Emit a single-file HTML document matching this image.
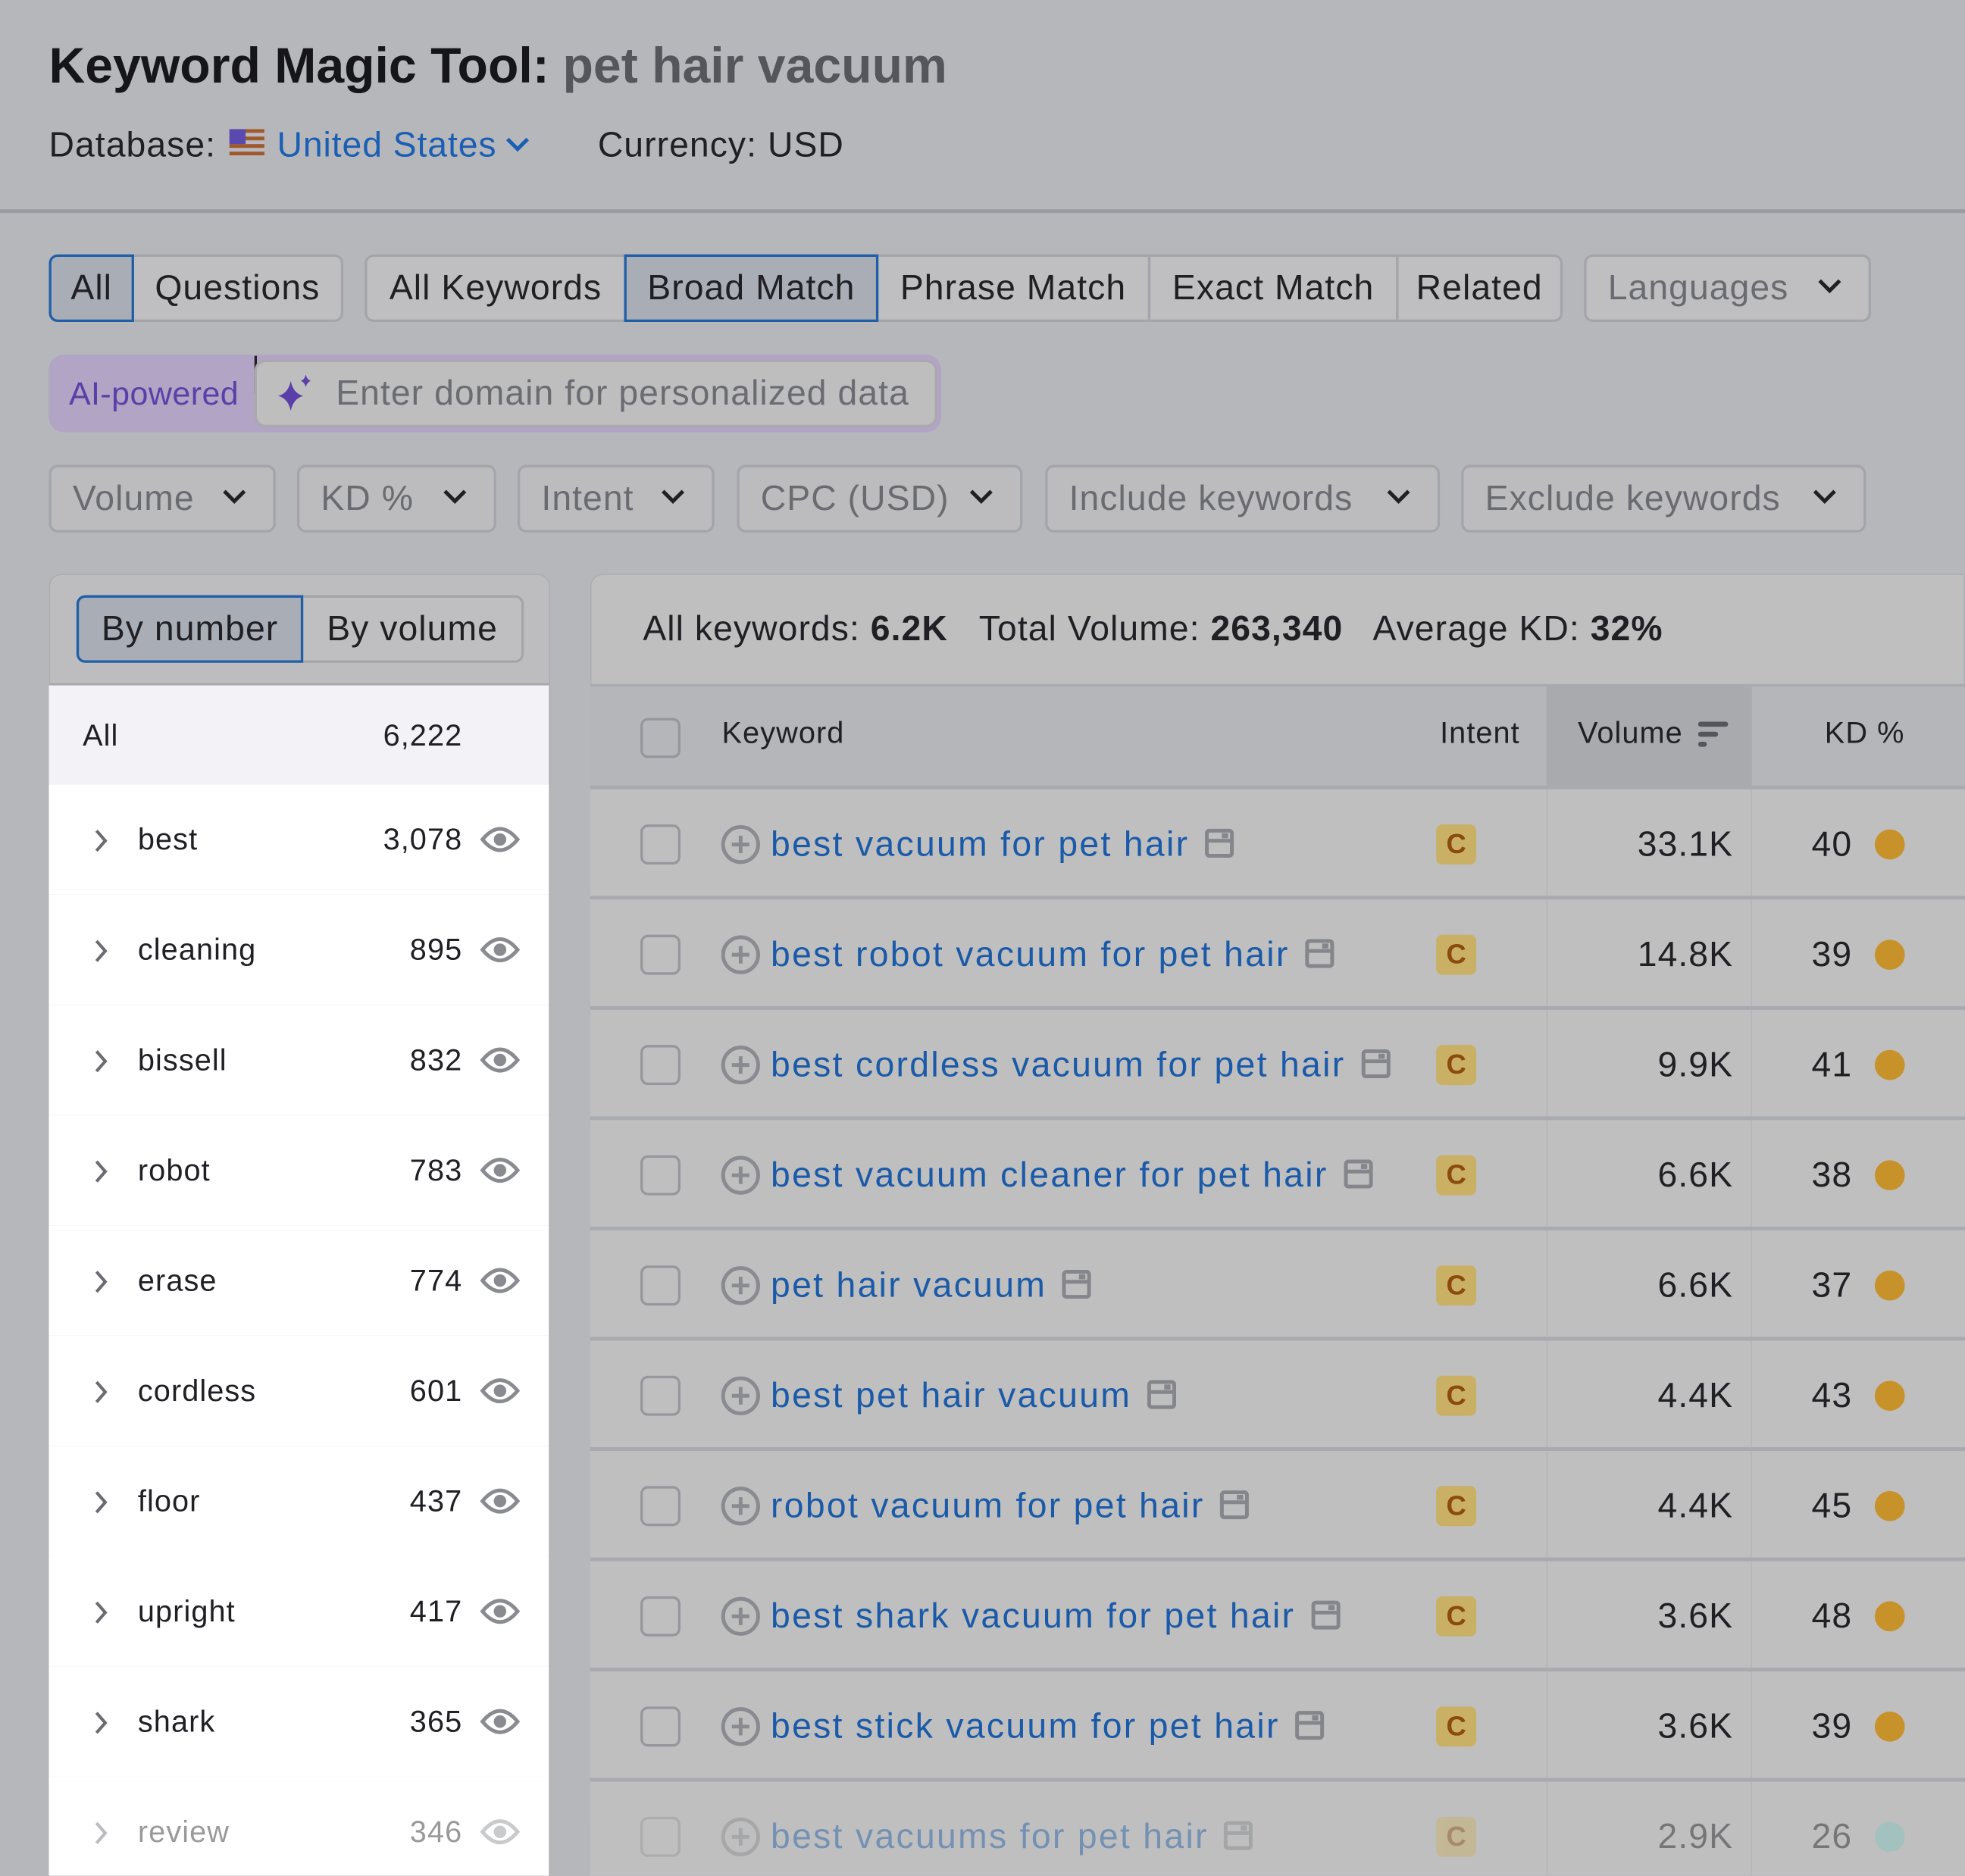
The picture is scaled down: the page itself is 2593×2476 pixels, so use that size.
<!DOCTYPE html>
<html><head><meta charset="utf-8"><style>
*{box-sizing:border-box;margin:0;padding:0}
html,body{width:2593px;height:2475px;overflow:hidden;background:#b6b7bb}
#s{position:absolute;left:0;top:0;width:1568px;height:1497px;overflow:hidden;transform:scale(1.6537);transform-origin:0 0;font-family:"Liberation Sans",sans-serif;color:#1f1f24;letter-spacing:0.04em}
.a{position:absolute;white-space:nowrap}
.btn{position:absolute;height:54px;border:2px solid #a4a5aa;background:#bfbfc1;font-size:28px;line-height:50px;text-align:center;color:#1f1f24}
.sel{background:#a9adb5;border-color:#1f5fa8;z-index:2}
.flt{position:absolute;top:371px;height:54px;border:2px solid #a4a5aa;border-radius:7px;background:#bcbcbe;font-size:28px;line-height:50px;color:#6a6b71;padding-left:17px}
.chev{position:absolute;right:20px;top:16px;width:22px;height:14px}
.lrow{position:absolute;left:39px;width:399px;height:88px;background:#fff;font-size:24px}
.lrow .n{position:absolute;left:71px;top:31px}
.lrow .c{position:absolute;right:69px;top:31px}
.trow{position:absolute;left:471px;width:1097px;height:88px;background:#bfbfbf;border-bottom:3px solid #a9aaae;font-size:28px}
</style></head><body><div id="s">
<div class="a" style="left:39px;top:31px;font-size:40px;font-weight:bold;color:#16161a;letter-spacing:0">Keyword Magic Tool:</div>
<div class="a" style="left:449px;top:31px;font-size:40px;font-weight:bold;color:#55565c;letter-spacing:0">pet hair vacuum</div>
<div class="a" style="left:39px;top:100px;font-size:28px">Database:</div>
<svg class="a" style="left:183px;top:103px" width="28" height="22"><rect width="28" height="22" fill="#b9b9c4"/><g fill="#a05a2a"><rect y="0" width="28" height="3"/><rect y="6" width="28" height="3"/><rect y="12" width="28" height="3"/><rect y="18" width="28" height="3"/></g><rect width="13" height="12" fill="#5a4ab0"/></svg>
<div class="a" style="left:221px;top:100px;font-size:28px;color:#1a5fb4;letter-spacing:0.02em">United States</div>
<svg class="a" style="left:403px;top:108px" width="20" height="14"><path d="M2 3l8 8 8-8" fill="none" stroke="#1a5fb4" stroke-width="3"/></svg>
<div class="a" style="left:477px;top:100px;font-size:28px">Currency: USD</div>
<div class="a" style="left:0;top:167px;width:1568px;height:3px;background:#9b9ca1"></div>

<div class="btn sel" style="left:39px;top:203px;width:68px;border-radius:7px 0 0 7px">All</div>
<div class="btn" style="left:105px;top:203px;width:169px;border-radius:0 7px 7px 0">Questions</div>
<div class="btn" style="left:291px;top:203px;width:209px;border-radius:7px 0 0 7px">All Keywords</div>
<div class="btn sel" style="left:498px;top:203px;width:203px">Broad Match</div>
<div class="btn" style="left:699px;top:203px;width:219px">Phrase Match</div>
<div class="btn" style="left:916px;top:203px;width:200px">Exact Match</div>
<div class="btn" style="left:1114px;top:203px;width:133px;border-radius:0 7px 7px 0">Related</div>
<div class="btn" style="left:1264px;top:203px;width:229px;border-radius:7px;color:#6a6b71;text-align:left;padding-left:17px">Languages<svg class="chev" viewBox="0 0 22 14"><path d="M3 3l8 8 8-8" fill="none" stroke="#1f1f24" stroke-width="3"/></svg></div>

<div class="a" style="left:39px;top:283px;width:712px;height:62px;background:#b2a4c4;border-radius:12px"></div>
<div class="a" style="left:55px;top:299px;font-size:26px;color:#5b3fa8;letter-spacing:0.01em">AI-powered</div>
<div class="a" style="left:203px;top:284px;width:2px;height:30px;background:#222"></div>
<div class="a" style="left:203px;top:287px;width:545px;height:54px;background:#bebebf;border:2px solid #a9a9ae;border-radius:9px"></div>
<svg class="a" style="left:218px;top:298px" width="34" height="34" viewBox="0 0 34 34"><path d="M14 6q2 10 10 12q-8 2-10 12q-2-10-10-12q8-2 10-12z" fill="#5b3fa8"/><path d="M26 1q1 4 4 5q-3 1-4 5q-1-4-4-5q3-1 4-5z" fill="#5b3fa8"/></svg>
<div class="a" style="left:268px;top:298px;font-size:28px;color:#6b6c72">Enter domain for personalized data</div>

<div class="flt" style="left:39px;width:181px">Volume<svg class="chev" viewBox="0 0 22 14"><path d="M3 3l8 8 8-8" fill="none" stroke="#1f1f24" stroke-width="3"/></svg></div>
<div class="flt" style="left:237px;width:159px">KD %<svg class="chev" viewBox="0 0 22 14"><path d="M3 3l8 8 8-8" fill="none" stroke="#1f1f24" stroke-width="3"/></svg></div>
<div class="flt" style="left:413px;width:157px">Intent<svg class="chev" viewBox="0 0 22 14"><path d="M3 3l8 8 8-8" fill="none" stroke="#1f1f24" stroke-width="3"/></svg></div>
<div class="flt" style="left:588px;width:228px">CPC (USD)<svg class="chev" viewBox="0 0 22 14"><path d="M3 3l8 8 8-8" fill="none" stroke="#1f1f24" stroke-width="3"/></svg></div>
<div class="flt" style="left:834px;width:315px">Include keywords<svg class="chev" viewBox="0 0 22 14"><path d="M3 3l8 8 8-8" fill="none" stroke="#1f1f24" stroke-width="3"/></svg></div>
<div class="flt" style="left:1166px;width:323px">Exclude keywords<svg class="chev" viewBox="0 0 22 14"><path d="M3 3l8 8 8-8" fill="none" stroke="#1f1f24" stroke-width="3"/></svg></div>

<div class="a" style="left:39px;top:458px;width:400px;height:1060px;background:#bdbdbf;border-radius:10px 10px 0 0;border:1px solid #adaeb2"></div>
<div class="btn sel" style="left:61px;top:475px;width:181px;border-radius:7px 0 0 7px">By number</div>
<div class="btn" style="left:240px;top:475px;width:178px;border-radius:0 7px 7px 0">By volume</div>
<div class="lrow" style="top:545px;height:81px;background:#f3f3f7;border-top:2px solid #a8a9ad"><span class="a" style="left:27px;top:27px">All</span><span class="a" style="right:69px;top:27px">6,222</span></div>
<div id="lrows"></div>

<div class="a" style="left:471px;top:458px;width:1097px;height:1060px;background:#bfbfbf;border-radius:10px 0 0 0;border:1px solid #adaeb2"></div>
<div class="a" style="left:513px;top:486px;font-size:28px">All keywords: <b>6.2K</b>&nbsp;&nbsp; Total Volume: <b>263,340</b>&nbsp;&nbsp; Average KD: <b>32%</b></div>
<div class="a" style="left:471px;top:546px;width:1097px;height:84px;background:#b5b6ba;border-top:2px solid #a9aaae;border-bottom:3px solid #a9aaae"></div>
<div class="a" style="left:1234px;top:548px;width:164px;height:79px;background:#a9aaae"></div>
<div class="a" style="left:511px;top:573px;width:32px;height:32px;border:2px solid #96979c;border-radius:6px"></div>
<div class="a" style="left:576px;top:572px;font-size:24px">Keyword</div>
<div class="a" style="left:1149px;top:572px;font-size:24px">Intent</div>
<div class="a" style="left:1259px;top:572px;font-size:24px">Volume</div>
<svg class="a" style="left:1355px;top:575px" width="24" height="22"><g stroke="#55565c" stroke-width="4" stroke-linecap="round"><path d="M2 3h20M2 11h12M2 19h3"/></g></svg>
<div class="a" style="left:1456px;top:572px;font-size:24px">KD %</div>
<div id="trows"></div>
</div>
<script>
var L=[["best","3,078"],["cleaning","895"],["bissell","832"],["robot","783"],["erase","774"],["cordless","601"],["floor","437"],["upright","417"],["shark","365"],["review","346"]];
var h="";L.forEach(function(r,i){var t=626+i*88;var f=i==9?'opacity:0.45;':'';h+='<div class="lrow" style="top:'+t+'px"><svg class="a" style="left:36px;top:35px;'+f+'" width="12" height="20"><path d="M2 2l7 8-7 8" fill="none" stroke="#6b6c72" stroke-width="2.5"/></svg><span class="n" style="'+f+'">'+r[0]+'</span><span class="c" style="'+f+'">'+r[1]+'</span><svg class="a" style="left:344px;top:31px;'+f+'" width="32" height="26" viewBox="0 0 32 26"><path d="M2 13Q16-4 30 13Q16 30 2 13Z" fill="none" stroke="#8a8b90" stroke-width="3"/><circle cx="16" cy="13" r="5" fill="#8a8b90"/></svg></div>'});
document.getElementById("lrows").outerHTML=h;
var T=[["best vacuum for pet hair","33.1K","40",1],["best robot vacuum for pet hair","14.8K","39",1],["best cordless vacuum for pet hair","9.9K","41",1],["best vacuum cleaner for pet hair","6.6K","38",1],["pet hair vacuum","6.6K","37",1],["best pet hair vacuum","4.4K","43",1],["robot vacuum for pet hair","4.4K","45",1],["best shark vacuum for pet hair","3.6K","48",1],["best stick vacuum for pet hair","3.6K","39",1],["best vacuums for pet hair","2.9K","26",0]];
h="";T.forEach(function(r,i){var t=630+i*88;var f=i==9?'opacity:0.45;':'';h+='<div class="trow" style="top:'+t+'px"><div class="a" style="left:763px;top:0;width:164px;height:85px;border-left:1px solid #b6b6b8;border-right:1px solid #b6b6b8"></div><div style="position:absolute;inset:0;'+f+'"><div class="a" style="left:40px;top:28px;width:32px;height:32px;border:2px solid #96979c;border-radius:6px"></div><svg class="a" style="left:104px;top:28px" width="32" height="32"><circle cx="16" cy="16" r="14" fill="none" stroke="#8a8b90" stroke-width="3"/><path d="M16 9v14M9 16h14" stroke="#8a8b90" stroke-width="3"/></svg><span class="a kw" style="left:144px;top:28px;color:#1a5aa8;letter-spacing:0.05em">'+r[0]+'<svg style="margin-left:12px;vertical-align:-2px" width="24" height="24"><rect x="2" y="2" width="20" height="20" rx="2" fill="none" stroke="#85868b" stroke-width="3"/><path d="M2 10h20" stroke="#85868b" stroke-width="3"/><rect x="14" y="4" width="5" height="4" fill="#85868b"/></svg></span><div class="a" style="left:675px;top:28px;width:32px;height:32px;background:#c9b064;border-radius:5px;color:#8a4a10;font-size:22px;font-weight:bold;text-align:center;line-height:32px;letter-spacing:0">C</div><span class="a" style="right:185px;top:28px">'+r[1]+'</span><span class="a" style="right:90px;top:28px">'+r[2]+'</span><div class="a" style="left:1025px;top:32px;width:24px;height:24px;border-radius:50%;background:'+(r[3]?'#c8922a':'#7fc4c0')+'"></div></div></div>'});
document.getElementById("trows").outerHTML=h;
</script>
</body></html>
